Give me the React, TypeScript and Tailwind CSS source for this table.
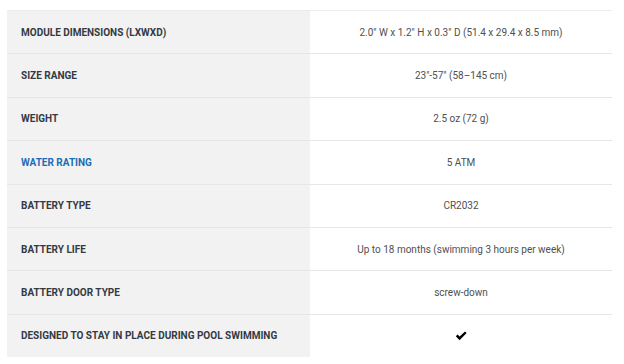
import React from "react";

const rows: { label: string; value: React.ReactNode; blue?: boolean }[] = [
  { label: "MODULE DIMENSIONS (LXWXD)", value: '2.0" W x 1.2" H x 0.3" D (51.4 x 29.4 x 8.5 mm)' },
  { label: "SIZE RANGE", value: '23"-57" (58\u2013145 cm)' },
  { label: "WEIGHT", value: "2.5 oz (72 g)" },
  { label: "WATER RATING", value: "5 ATM", blue: true },
  { label: "BATTERY TYPE", value: "CR2032" },
  { label: "BATTERY LIFE", value: "Up to 18 months (swimming 3 hours per week)" },
  { label: "BATTERY DOOR TYPE", value: "screw-down" },
  {
    label: "DESIGNED TO STAY IN PLACE DURING POOL SWIMMING",
    value: (
      <svg width="12" height="10" viewBox="0 0 12 10" className="block">
        <path d="M0.8 5.2 L2.6 3.6 L4.6 5.6 L10 0.4 L11.6 2 L4.6 9.2 Z" fill="#000" />
      </svg>
    ),
  },
];

export default function App() {
  return (
    <div className="w-[624px] h-[364px] bg-white pt-[10px] pl-[7px]" style={{ fontFamily: "Roboto, 'Liberation Sans', sans-serif" }}>
      <div className="w-[605px] flex flex-col">
        {rows.map((r, i) => (
          <div key={i} className="flex h-[43.4px] border-t border-[#e6e6e6]" style={i === 0 ? { borderTopColor: "#ececec" } : undefined}>
            <div className="w-[303px] bg-[#f2f2f2] flex items-center pl-[14px] text-[10px] font-bold">
              <span className={r.blue ? "text-[#1b6db5]" : "text-[#333a44]"}>{r.label}</span>
            </div>
            <div className="flex-1 flex items-center justify-center text-[10px] text-[#505050]">
              {r.value}
            </div>
          </div>
        ))}
      </div>
    </div>
  );
}
